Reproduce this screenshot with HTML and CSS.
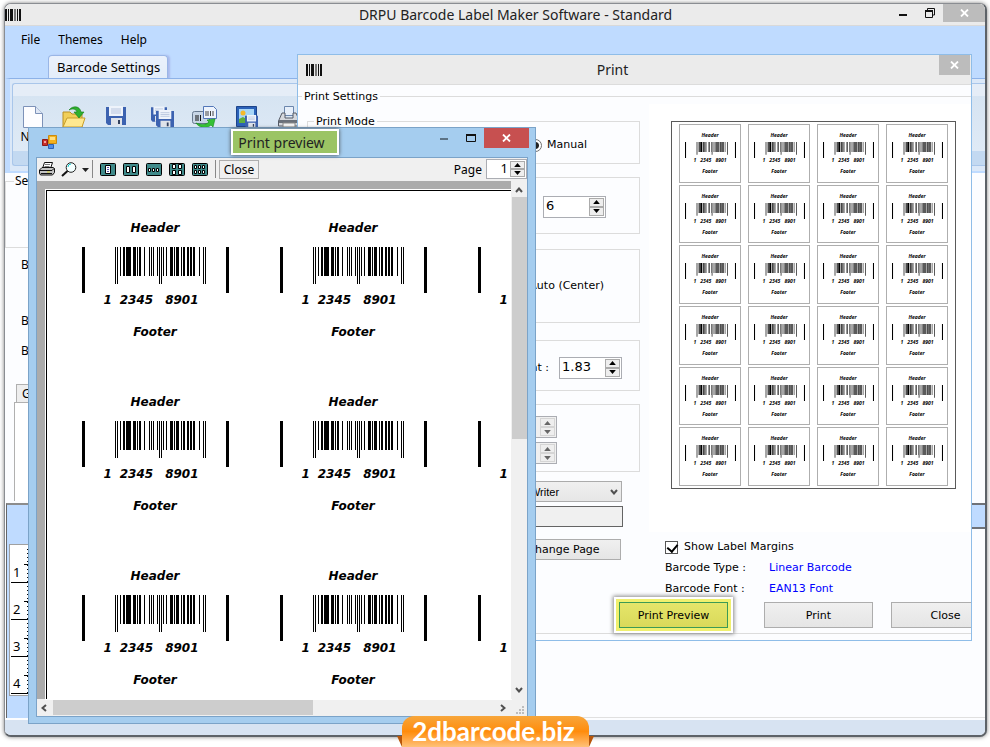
FILE: index.html
```html
<!DOCTYPE html>
<html lang="en">
<head>
  <meta charset="UTF-8">
  <title>DRPU Barcode Label Maker Software - Standard</title>
  <link rel="stylesheet" href="styles.css">
</head>
<body>
  <!-- shared shapes -->
  <svg class="defs" aria-hidden="true">
    <symbol id="app-icon" viewBox="0 0 16 12">
      <path d="M0 0h2v12h-2zM3 0h1v12h-1zM5 0h3v12h-3zM12 0h1v12h-1zM14 0h2v12h-2z" fill="#111"/>
      <path d="M9 0h2v12h-2z" fill="#777"/>
    </symbol>
    <symbol id="close-x" viewBox="0 0 9 8">
      <path d="M1 .5l7 7M8 .5l-7 7" stroke="currentColor" stroke-width="1.8" fill="none"/>
    </symbol>
    <symbol id="barcode" viewBox="0 0 147 46">
      <path d="M0 0h3v46h-3zM144 0h3v46h-3z"/>
      <path d="M33 0h1v37h-1zM35 0h1v37h-1zM77 0h1v37h-1zM79 0h1v37h-1zM121 0h1v37h-1zM123 0h1v37h-1z"/>
      <path d="M38 0h1v29h-1zM41 0h2v29h-2zM44 0h5v29h-5zM51 0h3v29h-3zM55 0h1v29h-1zM57 0h2v29h-2zM62 0h1v29h-1zM67 0h1v29h-1zM69 0h1v29h-1zM71 0h1v29h-1zM75 0h1v29h-1zM81 0h1v29h-1zM84 0h1v29h-1zM88 0h3v29h-3zM92 0h1v29h-1zM94 0h3v29h-3zM99 0h1v29h-1zM101 0h2v29h-2zM105 0h2v29h-2zM108 0h2v29h-2zM111 0h2v29h-2zM117 0h1v29h-1z"/>
    </symbol>
    <symbol id="floppy" viewBox="0 0 20 20">
      <path d="M0 1h20v18h-18l-2-2z" fill="#3c62b0"/>
      <path d="M3 0h14v10h-14z" fill="#eef3fb"/>
      <path d="M5 3h10M5 5h10M5 7h10" stroke="#b9c6df" fill="none"/>
      <path d="M5 12h11v7h-11z" fill="#dfe3ea"/>
      <path d="M12 14h2v4h-2z" fill="#33415e"/>
    </symbol>
    <symbol id="up" viewBox="0 0 5 3"><path d="M0 3L2.500 0L5 3z" fill="currentColor"/></symbol>
    <symbol id="down" viewBox="0 0 5 3"><path d="M0 0L2.500 3L5 0z" fill="currentColor"/></symbol>
    <symbol id="chevron" viewBox="0 0 8 6">
      <path d="M1 1l3 3.500l3-3.500" stroke="#505050" stroke-width="2" fill="none"/>
    </symbol>
  </svg>

  <div class="desktop">
    <main class="app">
      <header class="titlebar">
        <svg class="app-icon"><use href="#app-icon"/></svg>
        <h1 class="app-title">DRPU Barcode Label Maker Software - Standard</h1>
        <div class="window-buttons">
          <button type="button" aria-label="Minimize"><svg width="8" height="8"><path d="M0 5h8v2h-8z" fill="#111"/></svg></button>
          <button type="button" aria-label="Restore"><svg width="10" height="10"><path d="M2.500 2V.5h7V7H8M.5 3h7v6.500h-7z" fill="none" stroke="#111"/><path d="M0 2h8v2h-8z" fill="#111"/></svg></button>
          <button type="button" class="close-gray" aria-label="Close"><svg width="9" height="8"><use href="#close-x"/></svg></button>
        </div>
      </header>

      <nav class="menubar">
        <a href="#">File</a>
        <a href="#">Themes</a>
        <a href="#">Help</a>
      </nav>
      <div class="tabs">
        <button type="button" class="tab">Barcode Settings</button>
      </div>

      <section class="ribbon">
        <div class="ribbon-group">
          <button type="button" class="tool">
            <svg width="20" height="22"><path d="M.5.5h12l7 7v14h-19z" fill="#fdfdff" stroke="#7d92b8"/><path d="M12.500.5v7h7" fill="#dfe7f5" stroke="#7d92b8"/></svg>
            New
          </button>
          <button type="button" class="tool" aria-label="Open">
            <svg width="24" height="22"><path d="M1 21V6h7l2 2h10v13z" fill="#f1cf59" stroke="#b98f22"/><path d="M1 21l4-9h18l-3 9z" fill="#ffe88f" stroke="#c79d2c"/><path d="M7 4c4-5 11-4 12 2h3l-5 6l-5-6h3c-1-3-4-4-8-2z" fill="#2fb12f" stroke="#167a18" stroke-width=".6"/></svg>
          </button>
          <button type="button" class="tool" aria-label="Save">
            <svg width="20" height="20"><use href="#floppy"/></svg>
          </button>
          <button type="button" class="tool tool-gap" aria-label="Save As">
            <svg width="24" height="22"><svg width="16" height="17"><use href="#floppy"/></svg><svg x="5" y="4" width="18" height="18"><use href="#floppy"/></svg></svg>
          </button>
          <button type="button" class="tool" aria-label="Export">
            <svg width="26" height="22"><rect x=".5" y="5.500" width="17" height="12" rx="2" fill="#c8d6e6" stroke="#66798f"/><path d="M4 9v6M6 9v6M8.500 9v6" stroke="#111"/><path d="M11.500.5h10l3 3v9h-13z" fill="#eef4fd" stroke="#5377b8"/><path d="M14 5v5M16 5v5M18.500 5v5M21 5v5" stroke="#444"/><path d="M4 17c3 5 11 6 15 2l2 2l2-8l-8 1l2 2c-3 3-8 3-13 1z" fill="#35c135" stroke="#138a17" stroke-width=".6"/></svg>
          </button>
          <button type="button" class="tool" aria-label="Export Image">
            <svg width="22" height="22"><path d="M.5.5h20v20h-20z" fill="#2b62b9" stroke="#1d448a"/><path d="M3 3h15v14h-15z" fill="#a8d6f7"/><circle cx="7" cy="7" r="2.500" fill="#f6b92b"/><path d="M3 17v-4l4-2l5 3v3z" fill="#5fae3e"/><svg x="9" y="9" width="13" height="13"><use href="#floppy"/></svg></svg>
          </button>
          <button type="button" class="tool" aria-label="Print">
            <svg width="22" height="22"><path d="M6.500.5h9v9h-9z" fill="#e6effa" stroke="#6b86ad"/><path d="M4 7h3v5h8v-5h3l3.500 8v5h-21v-5z" fill="#d5d8dd" stroke="#555b66"/><path d="M1 14h20v3h-20z" fill="#6a707a"/><path d="M5 17h12v4h-12z" fill="#f4f4f4" stroke="#888"/></svg>
          </button>
        </div>
      </section>

      <section class="work">
        <fieldset class="select-box"><legend>Select</legend></fieldset>
        <p class="work-row">Barcode</p>
        <p class="work-row">Barcode</p>
        <p class="work-row">Barcode</p>
        <div class="work-tabs"><button type="button">General</button></div>
        <div class="work-page"></div>
      </section>

      <section class="canvas">
        <div class="canvas-side">
          <ol class="ruler">
            <li>1</li>
            <li>2</li>
            <li>3</li>
            <li>4</li>
          </ol>
        </div>
        <div class="canvas-main"><div class="canvas-strip"></div></div>
      </section>
      <footer class="statusbar"></footer>
    </main>

    <section class="dialog" aria-label="Print">
      <header class="dialog-title">
        <svg class="app-icon"><use href="#app-icon"/></svg>
        <h2>Print</h2>
        <button type="button" class="close-gray" aria-label="Close"><svg width="9" height="8"><use href="#close-x"/></svg></button>
      </header>
      <fieldset class="settings">
        <legend>Print Settings</legend>
        <div class="columns">
          <div class="options">
            <fieldset class="box box-mode">
              <legend>Print Mode</legend>
              <label class="radio"><input type="radio" name="mode" checked>Manual</label>
            </fieldset>
            <div class="box box-count">
              <div class="spin"><input type="text" value="6" aria-label="Labels down"><div class="arrows"><button type="button" aria-label="More"><svg width="7" height="4"><use href="#up"/></svg></button><button type="button" aria-label="Less"><svg width="7" height="4"><use href="#down"/></svg></button></div></div>
            </div>
            <div class="box box-align">
              <label class="radio"><input type="radio" name="align">Auto (Center)</label>
            </div>
            <div class="box box-margin">
              <label for="right">Right :</label>
              <div class="spin"><input type="text" id="right" value="1.83"><div class="arrows"><button type="button" aria-label="More"><svg width="7" height="4"><use href="#up"/></svg></button><button type="button" aria-label="Less"><svg width="7" height="4"><use href="#down"/></svg></button></div></div>
            </div>
            <div class="box box-space">
              <div class="spin off"><input type="text" disabled aria-label="Horizontal spacing"><div class="arrows"><button type="button" disabled aria-label="More"><svg width="7" height="4"><use href="#up"/></svg></button><button type="button" disabled aria-label="Less"><svg width="7" height="4"><use href="#down"/></svg></button></div></div>
              <div class="spin off"><input type="text" disabled aria-label="Vertical spacing"><div class="arrows"><button type="button" disabled aria-label="More"><svg width="7" height="4"><use href="#up"/></svg></button><button type="button" disabled aria-label="Less"><svg width="7" height="4"><use href="#down"/></svg></button></div></div>
            </div>
            <div class="printer">
              <select aria-label="Printer"><option>Microsoft XPS Document Writer</option></select>
              <svg width="8" height="6"><use href="#chevron"/></svg>
            </div>
            <input type="text" class="page-size" aria-label="Page size" readonly>
            <button type="button" class="btn change-page">Change Page</button>
          </div>

          <div class="result">
            <div class="paper"><div class="thumbs" id="thumbs"></div></div>
            <label class="check"><input type="checkbox" checked>Show Label Margins</label>
            <dl class="info">
              <dt>Barcode Type :</dt><dd>Linear Barcode</dd>
              <dt>Barcode Font :</dt><dd>EAN13 Font</dd>
            </dl>
          </div>
        </div>
        <div class="actions">
          <button type="button" class="btn btn-marked">Print Preview</button>
          <button type="button" class="btn btn-print">Print</button>
          <button type="button" class="btn">Close</button>
        </div>
      </fieldset>
    </section>

    <section class="preview" aria-label="Print preview">
      <header class="preview-title">
        <svg width="15" height="14"><path d="M6.500.5h8v8h-8z" fill="#f5b21d" stroke="#c98a10"/><path d="M8 2h5v3h-5z" fill="#ffdf83"/><path d="M.5 4.500h5v6h-5z" fill="#c9302c" stroke="#8c1a17"/><path d="M2 6h2v2h-2z" fill="#f3a29e"/><path d="M6.500 9.500h5v4h-5z" fill="#4f8ee8" stroke="#2d62b5"/></svg>
        <h2>Print preview</h2>
        <div class="window-buttons">
          <button type="button" aria-label="Minimize"><svg width="8" height="4"><path d="M0 2h8v2h-8z" fill="#5c7386"/></svg></button>
          <button type="button" aria-label="Maximize"><svg width="10" height="8"><path d="M.5.5h9v7h-9z" fill="none" stroke="#111"/><path d="M0 0h10v2h-10z" fill="#111"/></svg></button>
          <button type="button" class="close-red" aria-label="Close"><svg width="9" height="8"><use href="#close-x"/></svg></button>
        </div>
      </header>
      <div class="preview-body">
        <div class="toolbar">
          <button type="button" aria-label="Print"><svg width="16" height="14"><path d="M5.500.5h8l-2 6h-8z" fill="#fff" stroke="#111"/><path d="M6 2.500h5M5.500 4.500h5" stroke="#777"/><path d="M3 5.500h11l1.500 1v4l-2 2.500h-12l-1-2v-3z" fill="#c4c4c4" stroke="#111"/><path d="M1 8.500h12l2-2M2 11.500h11" stroke="#111" fill="none"/><path d="M8 10h3" stroke="#cc3"/></svg></button>
          <button type="button" class="zoom" aria-label="Zoom"><svg width="28" height="15"><circle cx="10" cy="5.500" r="4.800" fill="#f4ffff" stroke="#222"/><path d="M7 5a3 3 0 0 1 3-3" stroke="#1cc" fill="none"/><path d="M6.500 9L1 14" stroke="#111" stroke-width="2"/><path d="M21 6h7l-3.500 4z" fill="#222"/></svg></button>
          <span class="sep"></span>
          <button type="button" aria-label="One page"><svg width="16" height="13"><rect x=".5" y=".5" width="15" height="12" rx="1" fill="#3f8a8a" stroke="#000"/><path d="M5.500 2.500h5v8h-5z" fill="#fff" stroke="#000"/><path d="M7 4.500h2M7 6.500h2M7 8.500h2" stroke="#55a"/></svg></button>
          <button type="button" aria-label="Two pages"><svg width="16" height="13"><rect x=".5" y=".5" width="15" height="12" rx="1" fill="#3f8a8a" stroke="#000"/><path d="M3.500 3.500h3v6h-3zM9.500 3.500h3v6h-3z" fill="#fff" stroke="#000"/></svg></button>
          <button type="button" aria-label="Three pages"><svg width="16" height="13"><rect x=".5" y=".5" width="15" height="12" rx="1" fill="#3f8a8a" stroke="#000"/><path d="M2.500 5.500h2v3h-2zM6.500 5.500h2v3h-2zM10.500 5.500h2v3h-2z" fill="#fff" stroke="#000"/></svg></button>
          <button type="button" aria-label="Four pages"><svg width="16" height="13"><rect x=".5" y=".5" width="15" height="12" rx="1" fill="#3f8a8a" stroke="#000"/><path d="M3.500 1.500h3v4h-3zM9.500 1.500h3v4h-3zM3.500 7.500h3v4h-3zM9.500 7.500h3v4h-3z" fill="#fff" stroke="#000"/></svg></button>
          <button type="button" aria-label="Six pages"><svg width="16" height="13"><rect x=".5" y=".5" width="15" height="12" rx="1" fill="#3f8a8a" stroke="#000"/><path d="M2.500 2.500h2v3h-2zM6.500 2.500h2v3h-2zM10.500 2.500h2v3h-2zM2.500 7.500h2v3h-2zM6.500 7.500h2v3h-2zM10.500 7.500h2v3h-2z" fill="#fff" stroke="#000"/></svg></button>
          <span class="sep"></span>
          <button type="button" class="close-text">Close</button>
          <label for="page" class="page-label">Page</label>
          <div class="spin spin-page"><input type="text" id="page" value="1"><div class="arrows"><button type="button" aria-label="Next page"><svg width="7" height="4"><use href="#up"/></svg></button><button type="button" aria-label="Previous page"><svg width="7" height="4"><use href="#down"/></svg></button></div></div>
        </div>
        <div class="view">
          <div class="pane"><div class="sheet" id="sheet"></div></div>
          <div class="scroll-v">
            <svg class="flip" width="8" height="6"><use href="#chevron"/></svg>
            <div class="thumb-v"></div>
            <svg width="8" height="6"><use href="#chevron"/></svg>
          </div>
        </div>
        <div class="scroll-h">
          <svg width="6" height="8"><path d="M5 1l-3.500 3l3.500 3" stroke="#505050" stroke-width="2" fill="none"/></svg>
          <div class="thumb-h"></div>
          <svg width="6" height="8"><path d="M1 1l3.500 3l-3.500 3" stroke="#505050" stroke-width="2" fill="none"/></svg>
          <svg width="9" height="9"><path d="M6 0h2v2h-2zM6 3h2v2h-2zM3 3h2v2h-2zM6 6h2v2h-2zM3 6h2v2h-2zM0 6h2v2h-2z" fill="#bdbdbd"/></svg>
        </div>
      </div>
    </section>

    <a class="site" href="#">2dbarcode.biz</a>
  </div>

  <script>
    function fill(id, count) {
      const box = document.getElementById(id);
      for (let i = 0; i < count; i++) {
        const div = document.createElement("div");
        div.className = "label";
        div.innerHTML = `
          <span class="label-text">Header</span>
          <svg class="label-code"><use href="#barcode"/></svg>
          <span class="label-digits"><i>1</i><i>2345</i><i>8901</i></span>
          <span class="label-text">Footer</span>
        `;
        box.appendChild(div);
      }
    }

    fill("thumbs", 24);
    fill("sheet", 9);
  </script>
</body>
</html>
```
FILE: styles.css
```css
* {
  box-sizing: border-box;
}
body {
  margin: 0;
  background: #fff;
  font-family: "Noto Sans", "Open Sans", sans-serif;
  font-size: 12px;
  color: #000;
}
button, input, select {
  font: inherit;
  color: inherit;
  margin: 0;
}
button {
  padding: 0;
  border: none;
  background: none;
}
svg {
  display: block;
  flex: none;
}
h1, h2, p, ol, dl, dd {
  margin: 0;
  padding: 0;
}
fieldset {
  min-width: 0;
  margin: 0;
}
a {
  color: inherit;
  text-decoration: none;
}
.defs {
  position: absolute;
  width: 0;
  height: 0;
}
.desktop {
  position: relative;
  display: flex;
  height: 100vh;
  min-height: 747px;
  padding: 3px 3px 10px 4px;
  overflow: hidden;
}

/* main window */
.app {
  flex: 1;
  display: flex;
  flex-direction: column;
  border: 1px solid #8a8d92;
  border-right: 2px solid #5d6268;
  border-bottom: 2px solid #5d6268;
  border-radius: 7px;
  background: #fcfdff;
  box-shadow: 0 0 4px rgba(0,0,0,0.5);
  overflow: hidden;
}
.titlebar {
  display: flex;
  align-items: center;
  height: 22px;
  background: #ebebeb;
  border-bottom: 1px solid #d9d9d9;
}
.app-icon {
  width: 16px;
  height: 12px;
}
.app-title {
  flex: 1;
  padding: 1px 0 0 121px;
  font-size: 14px;
  line-height: 20px;
  font-weight: normal;
  text-align: center;
  color: #222;
}
.window-buttons {
  display: flex;
  align-items: center;
}
.window-buttons button {
  display: flex;
  align-items: center;
  justify-content: center;
  width: 27px;
  height: 18px;
}
.titlebar .window-buttons {
  align-self: flex-start;
}
.window-buttons .close-gray {
  width: 42px;
}
.close-gray {
  display: flex;
  align-items: center;
  justify-content: center;
  background: #bcbcbc;
  color: #fff;
}
.menubar {
  display: flex;
  gap: 18px;
  height: 29px;
  padding: 5px 16px;
  background: #bfdbff;
  line-height: 18px;
}
.tabs {
  height: 23px;
  padding-left: 43px;
  background: #bfdbff;
}
.tab {
  height: 24px;
  padding: 0 7px 1px 8px;
  border: 1px solid #9ab6e6;
  border-bottom: none;
  border-radius: 4px 4px 0 0;
  background: linear-gradient(#eaf1fc, #e3edf9);
  box-shadow: 2px 0 2px #a9b9ec;
  font-size: 13px;
}
.ribbon {
  height: 95px;
  padding: 4px 0 6px 2px;
  background: #dbe8f8;
  border-top: 1px solid #8db2e8;
  border-left: 5px solid #bfdbff;
  border-bottom: 2px solid #bfdbff;
}
.ribbon-group {
  display: flex;
  height: 83px;
  padding-top: 22px;
  border: 1px solid #a9c6ea;
  border-right: none;
  border-radius: 3px 0 0 3px;
  background: linear-gradient(#e5edf7 0, #e5edf7 12px, #d6e4f2 12px, #dfeaf6 67px, #c3d9f1 67px);
}
.tool {
  display: flex;
  flex-direction: column;
  align-items: center;
  width: 42px;
}
.tool-gap {
  margin-left: 5px;
}
.tool:first-child {
  width: 40px;
}

.work {
  flex: 1;
  width: 280px;
}
.select-box {
  height: 75px;
  padding: 0 8px;
  border: 1px solid #dcdcdc;
}
.select-box legend {
  padding: 0 1px;
  line-height: 16px;
}
.work-row {
  height: 30px;
  padding-left: 16px;
  line-height: 18px;
}
.work-row:nth-of-type(1) {
  height: 56px;
}
.select-box + .work-row {
  margin-top: 8px;
}
.work-tabs {
  padding: 12px 0 0 11px;
}
.work-tabs button {
  height: 18px;
  padding: 0 5px;
  border: 1px solid #b0b0b0;
  border-bottom: none;
  background: #eee;
  display: block;
}
.work-page {
  height: 99px;
  margin-left: 9px;
  border-left: 1px solid #b0b0b0;
  border-top: 1px solid #b0b0b0;
  background: #fff;
}

.canvas {
  display: flex;
  height: 215px;
  margin-left: 1px;
}
.canvas-side {
  width: 300px;
  padding: 39px 0 0 2px;
  background: #bfdbff;
  border-top: 2px solid #8c8c8c;
  border-left: 1px solid #666;
}
.ruler {
  width: 60px;
  padding: 1px;
  border: 1px solid #a0a0a0;
  background: #fff;
  list-style: none;
}
.ruler li {
  height: 37px;
  padding: 17px 0 0 2px;
  border-bottom: 1px solid #000;
  background:
    linear-gradient(#000, #000) 13px 18px / 20px 1px no-repeat,
    repeating-linear-gradient(#fff 0, #fff 3px, #000 3px, #000 4px) 16px 0 / 20px 36px no-repeat;
  font-size: 13px;
  line-height: 18px;
}
.canvas-main {
  flex: 1;
  border-bottom: 1px solid #e0e0e0;
}
.canvas-strip {
  height: 26px;
  background: #bfdbff;
  border-top: 2px solid #6f7277;
  border-bottom: 2px solid #6f7277;
}
.statusbar {
  height: 17px;
  border-top: 2px solid #fcfdff;
  background: #d7e3f2;
}

/* print dialog */
.dialog {
  position: absolute;
  left: 297px;
  right: 18px;
  top: 54px;
  padding-bottom: 6px;
  border: 1px solid #8fbde8;
  background: #fcfdff;
  font-family: "DejaVu Sans", Verdana, sans-serif;
  font-size: 11px;
  overflow: hidden;
}
.dialog-title {
  display: flex;
  height: 30px;
  padding: 0 1px 0 8px;
  background: #ebebeb;
  border-bottom: 1px solid #dcdcdc;
}
.dialog-title .app-icon {
  margin-top: 9px;
}
.dialog-title h2 {
  flex: 1;
  padding: 5px 36px 0 0;
  font-family: "Noto Sans", "Open Sans", sans-serif;
  font-size: 14px;
  line-height: 20px;
  font-weight: normal;
  text-align: center;
  color: #222;
}
.dialog-title .close-gray {
  width: 31px;
  height: 20px;
}
.settings {
  margin-top: 3px;
  padding: 0 0 5px;
  border: solid #dcdcdc;
  border-width: 1px 0;
}
.settings legend, .box legend {
  padding: 1px 2px 0;
  line-height: 15px;
}
.settings > legend {
  margin-left: 4px;
}
.columns {
  display: flex;
}
.options {
  display: flex;
  flex-direction: column;
  width: 342px;
  padding: 9px 0 0 9px;
}
.box {
  display: flex;
  align-items: center;
  justify-content: flex-end;
  gap: 10px;
  border: 1px solid #dcdcdc;
}
.box-mode {
  height: 51px;
  padding: 8px 52px 0 6px;
}
.box-mode .radio {
  justify-content: flex-end;
}
.box-count {
  height: 57px;
  margin-top: 13px;
  padding: 2px 33px 0 0;
}
.box-align {
  height: 74px;
  margin-top: 15px;
  padding-right: 35px;
}
.box-margin {
  height: 51px;
  margin-top: 17px;
  padding: 4px 17px 0 0;
}
.box-space {
  flex-direction: column;
  align-items: flex-end;
  justify-content: center;
  gap: 4px;
  height: 68px;
  margin-top: 13px;
  padding: 4px 82px 0 0;
}
.radio, .check {
  display: flex;
  align-items: center;
  gap: 5px;
  line-height: 16px;
}
.radio input {
  appearance: none;
  width: 13px;
  height: 13px;
  border: 1px solid #707070;
  border-radius: 50%;
  background: #fff;
}
.radio input:checked {
  background: radial-gradient(#222 0 3px, #fff 4px);
}
.spin {
  display: flex;
  width: 63px;
  height: 22px;
  padding: 1px;
  border: 1px solid #abadb3;
  background: #fff;
}
.spin input {
  flex: 1;
  min-width: 0;
  padding: 0 0 3px 1px;
  border: none;
  background: none;
  font-size: 13px;
}
.arrows {
  display: grid;
  grid-template-rows: 1fr 1fr;
  width: 15px;
}
.arrows button {
  display: flex;
  align-items: center;
  justify-content: center;
  border: 1px solid #ababab;
  background: #eee;
}
.spin.off {
  background: #f0f0f0;
  color: #666;
}
.spin.off button {
  border-color: #d5d5d5;
}
.printer {
  position: relative;
  align-self: flex-end;
  width: 222px;
  margin: 9px 18px 0 0;
}
.printer select {
  appearance: none;
  display: block;
  width: 100%;
  height: 21px;
  padding: 0 3px;
  border: 1px solid #ababab;
  border-radius: 0;
  background: linear-gradient(#f0f0f0, #e6e6e6);
  font-family: "Liberation Sans", Arial, sans-serif;
  font-size: 11px;
}
.printer svg {
  position: absolute;
  right: 4px;
  top: 8px;
}
.page-size {
  align-self: flex-end;
  width: 222px;
  height: 21px;
  margin: 4px 17px 0 0;
  border: 1px solid #646464;
  background: #f0f0f0;
}
.btn {
  flex: none;
  width: 109px;
  height: 26px;
  border: 1px solid #adadad;
  background: linear-gradient(#f0f0f0, #e5e5e5);
}
.change-page {
  align-self: flex-end;
  width: 115px;
  height: 21px;
  margin: 12px 19px 0 0;
}

.result {
  flex: 1;
  padding-left: 9px;
}
.paper {
  padding: 17px 15px 43px 22px;
  background: #fff;
}
.thumbs {
  display: grid;
  grid-template-columns: repeat(4, 1fr);
  grid-template-rows: repeat(6, 1fr);
  gap: 2px 7px;
  height: 368px;
  padding: 2px 7px;
  border: 1px solid #5a5a5a;
}
.check {
  margin: 7px 0 5px 16px;
  gap: 6px;
}
.check input {
  appearance: none;
  width: 13px;
  height: 13px;
  border: 1px solid #555;
  background: #fff;
}
.check input:checked::before {
  content: "";
  display: block;
  width: 5px;
  height: 8px;
  margin: 0 0 0 3px;
  border: solid #000;
  border-width: 0 2px 2px 0;
  transform: rotate(40deg);
}
.info {
  display: grid;
  grid-template-columns: 104px 1fr;
  row-gap: 5px;
  padding-left: 16px;
  line-height: 16px;
}
.info dd {
  color: #00f;
}
.actions {
  display: flex;
  gap: 18px;
  margin-top: 5px;
  padding-left: 321px;
}
.btn-marked {
  border: 1px solid #3c9a55;
  background: linear-gradient(#e5e56a, #d9d95a);
  box-shadow: 0 0 0 3px #f0f06e, 0 0 0 5px #fff, 0 0 4px 6px #888;
}
.btn-print {
  margin-left: 18px;
}

/* labels, small in the dialog and full size in the preview */
.label {
  display: flex;
  flex-direction: column;
  align-items: center;
  font-weight: bold;
  font-style: italic;
}
.label-digits {
  display: flex;
}
.thumbs .label {
  padding-top: 7px;
  border: 1px solid #aeaeae;
  font-family: "Noto Sans", sans-serif;
  font-size: 5px;
  line-height: 6px;
}
.thumbs .label-code {
  width: 51px;
  height: 16px;
  margin: 4px 0 0;
}
.thumbs .label-digits {
  gap: 4px;
  margin: -1px 0 5px;
}
.sheet .label {
  font-family: "DejaVu Sans", Verdana, sans-serif;
  font-size: 12px;
  line-height: 16px;
}
.sheet .label-code {
  width: 147px;
  height: 46px;
  margin-top: 11px;
}
.sheet .label-digits {
  gap: 12px;
  margin: -1px 8px 16px 0;
}
.sheet .label-digits i:first-child {
  margin-right: -4px;
}

/* preview window */
.preview {
  position: absolute;
  left: 28px;
  top: 127px;
  width: 508px;
  padding: 0 7px 6px;
  border: 1px solid #7ba3c8;
  background: #a5cdef;
}
.preview-title {
  display: grid;
  grid-template-columns: 1fr auto 1fr;
  height: 29px;
  padding-left: 6px;
}
.preview-title > svg {
  margin-top: 7px;
}
.preview-title h2 {
  height: 26px;
  margin-top: 1px;
  padding: 0 12px 0 5px;
  border: 2px solid #fff;
  background: #9bc464;
  box-shadow: 0 0 4px #444;
  font-size: 14px;
  line-height: 23px;
  font-weight: normal;
  color: #222;
}
.preview-title .window-buttons {
  justify-content: flex-end;
  height: 20px;
  margin-right: -1px;
}
.preview-title .close-red {
  width: 45px;
  height: 20px;
  background: #c75050;
  color: #fff;
}
.preview-body {
  border: 1px solid #7ba3c8;
}
.toolbar {
  display: flex;
  align-items: center;
  gap: 7px;
  height: 23px;
  padding: 0 0 1px 2px;
  background: #f0f0f0;
}
.sep {
  width: 1px;
  height: 18px;
  background: #888;
}
.zoom {
  margin: 0 -4px 0 -1px;
}
.toolbar .sep + .close-text {
  width: 40px;
  height: 19px;
  margin-left: -4px;
  border: 1px solid #adadad;
}
.page-label {
  margin-left: auto;
}
.spin-page {
  width: 41px;
  height: 20px;
  margin-left: -3px;
}
.spin-page input {
  text-align: right;
  padding-right: 2px;
}
.view {
  display: flex;
  height: 518px;
}
.pane {
  flex: 1;
  min-width: 0;
  padding: 9px 0 0 9px;
  background: #ababab;
}
.sheet {
  display: grid;
  grid-template-columns: repeat(3, 198px);
  grid-auto-rows: 174px;
  height: 100%;
  padding: 29px 0 0 9px;
  border: solid #000;
  border-width: 1px 0 0 1px;
  outline: 1px solid #fff;
  background: #fff;
  overflow: hidden;
}
.scroll-v {
  display: flex;
  flex-direction: column;
  align-items: center;
  width: 16px;
  padding: 6px 0;
  background: #f0f0f0;
}
.flip {
  transform: scaleY(-1);
}
.thumb-v {
  width: 15px;
  height: 242px;
  margin: 4px 0 auto;
  background: #cdcdcd;
}
.scroll-h {
  display: flex;
  align-items: center;
  height: 17px;
  padding: 0 2px 0 4px;
  background: #f0f0f0;
}
.thumb-h {
  width: 260px;
  height: 15px;
  margin: 0 auto 0 6px;
  background: #cdcdcd;
}
.scroll-h svg:last-child {
  margin: 6px 0 0 10px;
}

/* ribbon with the site name, folded at both ends */
.site {
  position: absolute;
  left: 50%;
  bottom: 0;
  height: 31px;
  width: 187px;
  margin-left: -93px;
  padding-right: 4px;
  border-radius: 12px 12px 0 0;
  background: linear-gradient(#f7a63b, #ff8c0c 50%, #ffc179);
  font-family: Lato, sans-serif;
  font-size: 26px;
  line-height: 30px;
  font-weight: bold;
  text-align: center;
  color: #fff;
}
.site::before, .site::after {
  content: "";
  position: absolute;
  bottom: 0;
  left: -5px;
  width: 5px;
  height: 11px;
  background: #b8560a;
  clip-path: polygon(0 0, 100% 0, 100% 100%);
}
.site::after {
  left: auto;
  right: -5px;
  clip-path: polygon(0 0, 100% 0, 0 100%);
}
```
